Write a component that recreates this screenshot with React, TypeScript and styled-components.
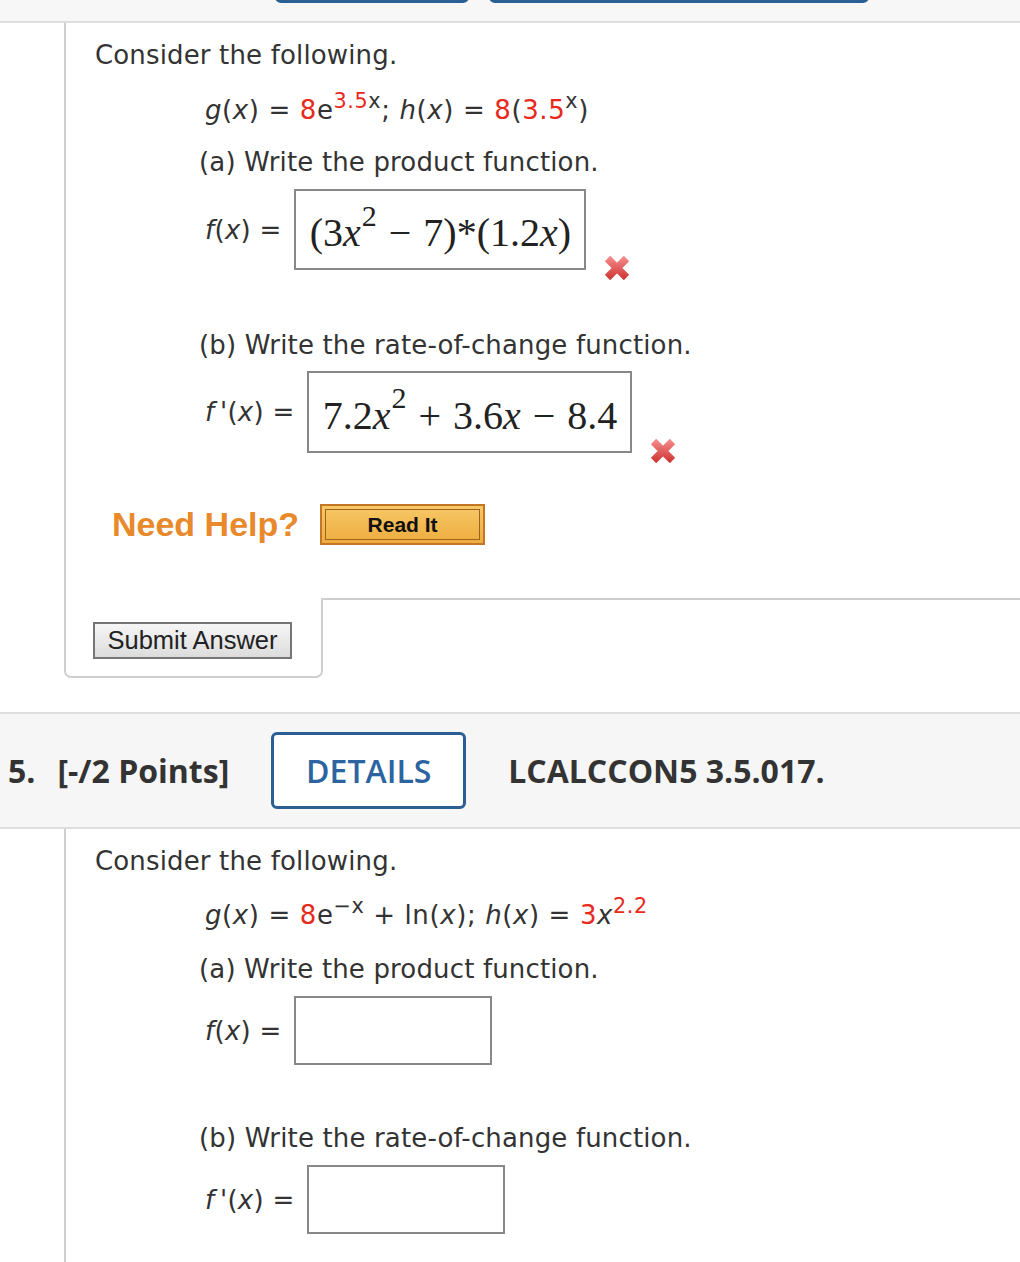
import styled, { createGlobalStyle } from "styled-components";

const GlobalStyle = createGlobalStyle`
  body {
    margin: 0;
    background: #fff;
    color: #333;
    font-family: "DejaVu Sans", Verdana, sans-serif;
    overflow: hidden;
  }
`;

const App = () => {
  return (
    <>
      <GlobalStyle />
      <TopBar>
        <TopButton $w={194} aria-hidden />
        <TopButton $w={380} aria-hidden />
      </TopBar>

      <QuestionBody>
        <Para>Consider the following.</Para>
        <Indent>
          <MathLine $mt={23}>
            <i>g</i>(<i>x</i>) = <Red>8</Red>e<Sup><Red>3.5</Red>x</Sup>; <i>h</i>(<i>x</i>) ={" "}
            <Red>8</Red>(<Red>3.5</Red>
            <Sup>x</Sup>)
          </MathLine>
          <Para $mt={20}>(a) Write the product function.</Para>
          <AnswerRow $mt={11}>
            <Label>
              <i>f</i>(<i>x</i>) =
            </Label>
            <AnswerBox $h={81}>
              (3<Var>x</Var>
              <MathSup>2</MathSup>
              <Op>−</Op>7)*(1.2<Var>x</Var>)
            </AnswerBox>
            <ErrorMark />
          </AnswerRow>
          <Para $mt={59}>(b) Write the rate-of-change function.</Para>
          <AnswerRow $mt={10}>
            <Label>
              <i>f</i>&thinsp;'(<i>x</i>) =
            </Label>
            <AnswerBox $h={82}>
              7.2<Var>x</Var>
              <MathSup>2</MathSup>
              <Op>+</Op>3.6<Var>x</Var>
              <Op>−</Op>8.4
            </AnswerBox>
            <ErrorMark />
          </AnswerRow>
        </Indent>
        <HelpRow>
          <NeedHelp>Need Help?</NeedHelp>
          <ReadItButton type="button">
            <span>Read It</span>
          </ReadItButton>
        </HelpRow>
      </QuestionBody>

      <Footer>
        <SubmitTab>
          <SubmitButton type="button">Submit Answer</SubmitButton>
        </SubmitTab>
        <FooterRest />
      </Footer>

      <QuestionHeader>
        <Number>5.</Number>
        <Points>[-/2 Points]</Points>
        <DetailsButton type="button">DETAILS</DetailsButton>
        <Code>LCALCCON5 3.5.017.</Code>
      </QuestionHeader>

      <QuestionBody $last>
        <Para>Consider the following.</Para>
        <Indent>
          <MathLine $mt={22}>
            <i>g</i>(<i>x</i>) = <Red>8</Red>e<Sup>−x</Sup> + ln(<i>x</i>); <i>h</i>(<i>x</i>) ={" "}
            <Red>3</Red>
            <i>x</i>
            <Sup>
              <Red>2.2</Red>
            </Sup>
          </MathLine>
          <Para $mt={22}>(a) Write the product function.</Para>
          <AnswerRow $mt={11}>
            <Label>
              <i>f</i>(<i>x</i>) =
            </Label>
            <AnswerBox $h={69} $w={198} />
          </AnswerRow>
          <Para $mt={57}>(b) Write the rate-of-change function.</Para>
          <AnswerRow $mt={11}>
            <Label>
              <i>f</i>&thinsp;'(<i>x</i>) =
            </Label>
            <AnswerBox $h={69} $w={198} />
          </AnswerRow>
        </Indent>
      </QuestionBody>
    </>
  );
};

const ErrorMark = () => (
  <Mark viewBox="0 0 26 26" aria-label="incorrect">
    <defs>
      <linearGradient id="xg" x1="0" y1="0" x2="0" y2="1">
        <stop offset="0" stopColor="#f28585" />
        <stop offset="1" stopColor="#d23a3a" />
      </linearGradient>
    </defs>
    <path d="M3.5 3.5 L22.5 22.5 M22.5 3.5 L3.5 22.5" stroke="url(#xg)" strokeWidth="7.5" strokeLinecap="butt" />
  </Mark>
);

export default App;

const TopBar = styled.div`
  height: 21px;
  background: #f7f7f7;
  border-bottom: 2px solid #dedede;
  overflow: hidden;
  display: flex;
  align-items: flex-end;
  gap: 20px;
  padding-left: 275px;
`;

const TopButton = styled.div<{ $w: number }>`
  width: ${(p) => p.$w}px;
  height: 60px;
  box-sizing: border-box;
  border: 3px solid #2b5f94;
  border-radius: 6px;
  margin-bottom: 18px;
  flex-shrink: 0;
`;

const QuestionBody = styled.div<{ $last?: boolean }>`
  margin-left: 64px;
  border-left: 2px solid #cfcfcf;
  padding: 16px 0 ${(p) => (p.$last ? "60px" : "53px")} 29px;
`;

const Para = styled.div<{ $mt?: number }>`
  font-size: 26px;
  letter-spacing: 0.15px;
  line-height: 32px;
  margin-top: ${(p) => p.$mt ?? 0}px;
  white-space: nowrap;
`;

const Indent = styled.div`
  padding-left: 104px;
`;

const MathLine = styled(Para)`
  padding-left: 6px;
  letter-spacing: 0.6px;
`;

const Red = styled.span`
  color: #e8291c;
`;

const Sup = styled.sup`
  font-size: 0.8em;
  line-height: 0;
  vertical-align: 0.55em;
`;

const AnswerRow = styled.div<{ $mt: number }>`
  display: flex;
  align-items: center;
  margin-top: ${(p) => p.$mt}px;
  padding-left: 6px;
`;

const Label = styled.div`
  font-size: 26px;
  letter-spacing: 0.3px;
  line-height: 32px;
  margin-right: 12px;
  white-space: nowrap;
`;

const AnswerBox = styled.div<{ $h: number; $w?: number }>`
  box-sizing: border-box;
  height: ${(p) => p.$h}px;
  ${(p) => (p.$w ? `width: ${p.$w}px;` : "")}
  border: 2px solid #888;
  padding: 6px 13px 0 14px;
  display: flex;
  align-items: center;
  font-family: "Liberation Serif", "Times New Roman", serif;
  font-size: 40px;
  color: #222;
  white-space: nowrap;
`;

const Var = styled.i`
  font-style: italic;
`;

const MathSup = styled.span`
  font-size: 0.75em;
  align-self: flex-start;
  margin-top: 2px;
  margin-left: 1px;
`;

const Op = styled.span`
  margin: 0 0.3em;
`;

const Mark = styled.svg`
  width: 26px;
  height: 26px;
  margin-left: 18px;
  align-self: flex-end;
  margin-bottom: -11px;
  flex-shrink: 0;
`;

const HelpRow = styled.div`
  display: flex;
  align-items: center;
  gap: 21px;
  margin-top: 51px;
  padding-left: 17px;
`;

const NeedHelp = styled.span`
  font-family: "Liberation Sans", Arial, sans-serif;
  font-weight: 700;
  font-size: 34px;
  color: #e8892b;
  line-height: 41px;
`;

const ReadItButton = styled.button`
  box-sizing: border-box;
  width: 165px;
  height: 41px;
  padding: 3px;
  border: 2px solid #c47624;
  background: linear-gradient(#f7c867, #eeac3e);
  cursor: pointer;

  span {
    display: flex;
    align-items: center;
    justify-content: center;
    height: 100%;
    box-sizing: border-box;
    border: 1px solid #9b6220;
    font-family: "Liberation Sans", Arial, sans-serif;
    font-weight: 700;
    font-size: 21px;
    color: #111;
  }
`;

const Footer = styled.div`
  display: flex;
  margin-left: 64px;
`;

const SubmitTab = styled.div`
  box-sizing: border-box;
  width: 259px;
  height: 80px;
  border: 2px solid #cfcfcf;
  border-top: none;
  border-radius: 0 0 7px 7px;
  padding: 24px 0 0 27px;
`;

const FooterRest = styled.div`
  flex: 1;
  border-top: 2px solid #cfcfcf;
`;

const SubmitButton = styled.button`
  box-sizing: border-box;
  width: 199px;
  height: 37px;
  border: 2px solid #757575;
  background: linear-gradient(#f6f6f6, #dcdcdc);
  font-family: "Liberation Sans", Arial, sans-serif;
  font-size: 25.5px;
  color: #222;
  padding: 0;
  cursor: pointer;
`;

const QuestionHeader = styled.div`
  margin-top: 34px;
  height: 113px;
  background: #f6f6f6;
  border-top: 2px solid #dedede;
  border-bottom: 2px solid #dedede;
  display: flex;
  align-items: center;
  padding-left: 8px;
  font-family: "Open Sans", sans-serif;
  font-weight: 700;
  font-size: 32px;
  color: #333;
`;

const Number = styled.span`
  margin-right: 22px;
`;

const Points = styled.span`
  margin-right: 42px;
`;

const DetailsButton = styled.button`
  box-sizing: border-box;
  width: 195px;
  height: 77px;
  border: 3px solid #2b5f94;
  border-radius: 6px;
  background: #fff;
  font-family: "Open Sans", sans-serif;
  font-weight: 600;
  font-size: 32px;
  color: #2b64a0;
  margin-right: 42px;
  padding: 0;
  cursor: pointer;
`;

const Code = styled.span``;
